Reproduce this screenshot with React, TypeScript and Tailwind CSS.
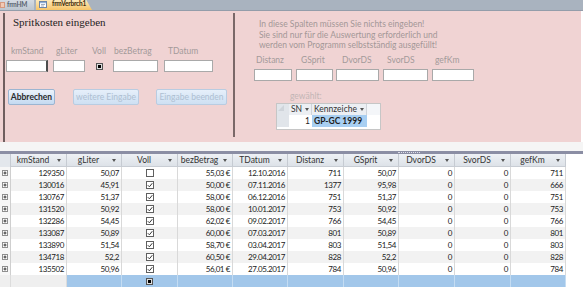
import React from "react";

const cols = [
  { name: "kmStand", w: "w-[56px]" },
  { name: "gLiter", w: "w-[55px]" },
  { name: "Voll", w: "w-[56px]" },
  { name: "bezBetrag", w: "w-[55px]" },
  { name: "TDatum", w: "w-[55px]" },
  { name: "Distanz", w: "w-[56px]" },
  { name: "GSprit", w: "w-[55px]" },
  { name: "DvorDS", w: "w-[56px]" },
  { name: "SvorDS", w: "w-[56px]" },
  { name: "gefKm", w: "w-[55px]" },
];

type Row = [string, string, boolean, string, string, string, string, string, string, string];

const rows: Row[] = [
  ["129350", "50,07", false, "55,03 €", "12.10.2016", "711", "50,07", "0", "0", "711"],
  ["130016", "45,91", true, "50,00 €", "07.11.2016", "1377", "95,98", "0", "0", "666"],
  ["130767", "51,37", true, "58,00 €", "06.12.2016", "751", "51,37", "0", "0", "751"],
  ["131520", "50,92", true, "58,00 €", "10.01.2017", "753", "50,92", "0", "0", "753"],
  ["132286", "54,45", true, "62,02 €", "09.02.2017", "766", "54,45", "0", "0", "766"],
  ["133087", "50,89", true, "60,00 €", "07.03.2017", "801", "50,89", "0", "0", "801"],
  ["133890", "51,54", true, "58,70 €", "03.04.2017", "803", "51,54", "0", "0", "803"],
  ["134718", "52,2", true, "60,50 €", "29.04.2017", "828", "52,2", "0", "0", "828"],
  ["135502", "50,96", true, "56,01 €", "27.05.2017", "784", "50,96", "0", "0", "784"],
];

const Arrow = () => (
  <svg width="4" height="3" viewBox="0 0 4 3">
    <polygon points="0,0 4,0 2,3" fill="#555" />
  </svg>
);

const Expand = () => (
  <svg width="6" height="6" viewBox="0 0 6 6">
    <rect x="0.5" y="0.5" width="5" height="5" fill="#fff" stroke="#8f8f8f" />
    <path d="M1.5 3h3M3 1.5v3" stroke="#333" strokeWidth="1" />
  </svg>
);

const Check = ({ checked }: { checked: boolean }) => (
  <svg width="8" height="8" viewBox="0 0 8 8">
    <rect x="0.5" y="0.5" width="7" height="7" fill="#fff" stroke="#5f5f5f" />
    {checked && <path d="M1.8 4.2 L3.4 5.8 L6.3 2.2" fill="none" stroke="#333" strokeWidth="1" />}
  </svg>
);

const NullCheck = () => (
  <div className="w-[7px] h-[7px] border border-[#555] bg-[#ddd] p-[1px]">
    <div className="w-full h-full bg-black" />
  </div>
);

const FormIcon = () => (
  <svg width="8" height="7" viewBox="0 0 8 7">
    <rect x="0.5" y="0.5" width="7" height="6" fill="#fff" stroke="#6d86a8" />
    <rect x="1" y="1" width="6" height="1.2" fill="#8fb0d8" />
    <path d="M2 3.5h4M2 5h3" stroke="#8a9ab0" strokeWidth="0.8" />
  </svg>
);

const btn = "h-[16px] rounded-[2px] border flex items-center justify-center text-[8.5px] bg-gradient-to-b";

export default function App() {
  return (
    <div className="w-[583px] h-[289px] overflow-hidden bg-white font-['Lato',sans-serif] text-[#222]">
      {/* tab bar */}
      <div className="h-[11px] bg-[#a9b3bf] border-b border-[#939daa] flex items-end">
        <div className="h-[10px] w-[34px] flex items-center gap-[2px] bg-gradient-to-b from-[#d5dbe3] to-[#bcc5cf]">
          <div className="w-[5px] h-[6px] bg-[#f2c9b4] border border-[#d69a80]" />
          <span className="text-[6.5px] font-bold text-[#5a6370] leading-none tracking-[-0.2px]">frmHM</span>
        </div>
        <div className="ml-[2px] h-[11px] w-[56px] flex items-center gap-[5px] pl-[3px] bg-gradient-to-b from-[#fdedc2] to-[#f6c466] [clip-path:polygon(0_0,89%_0,100%_100%,0_100%)]">
          <FormIcon />
          <span className="text-[6.5px] font-bold text-[#3b2a0c] leading-none tracking-[-0.2px]">frmVerbrch1</span>
        </div>
      </div>

      {/* form area */}
      <div className="h-[131px] bg-[#f0d3d3] mr-[2px] flex">
        <div className="w-[230px] ml-[3px] mt-[2px] border-l-2 border-[#6f5e5e] flex flex-col">
          <div className="pl-[8px] mt-[3px] text-[11px] leading-[13px] font-['Liberation_Serif',serif] text-[#1e1e1e]">
            Spritkosten eingeben
          </div>
          <div className="flex mt-[17px] pl-[6px] text-[8.5px] leading-[10px] text-[#a39a9a]">
            <span className="w-[45px]">kmStand</span>
            <span className="w-[36px]">gLiter</span>
            <span className="w-[22px]">Voll</span>
            <span className="w-[54px]">bezBetrag</span>
            <span>TDatum</span>
          </div>
          <div className="flex items-center mt-[4px] pl-[1px] h-[12px]">
            <div className="w-[42px] h-[12px] bg-white border border-[#a9a9a9] border-r-2 border-r-[#4d4d4d]" />
            <div className="ml-[5px] w-[32px] h-[12px] bg-white border border-[#a9a9a9]" />
            <div className="ml-[11px]">
              <NullCheck />
            </div>
            <div className="ml-[10px] w-[45px] h-[12px] bg-white border border-[#a9a9a9]" />
            <div className="ml-[6px] w-[49px] h-[12px] bg-white border border-[#a9a9a9]" />
          </div>
          <div className="flex mt-[17px] pl-[3px]">
            <div className={`${btn} w-[47px] border-[#9cb5d1] from-[#ecf3fb] to-[#c4daf1] font-bold text-[#2b2b2b]`}>
              Abbrechen
            </div>
            <div className={`${btn} ml-[18px] w-[66px] border-[#b9cce1] from-[#e6effa] to-[#cee0f3] text-[#aebfd2]`}>
              weitere Eingabe
            </div>
            <div className={`${btn} ml-[17px] w-[71px] border-[#b9cce1] from-[#e6effa] to-[#cee0f3] text-[#aebfd2]`}>
              Eingabe beenden
            </div>
          </div>
        </div>

        <div className="w-[2px] mt-[2px] mb-[5px] bg-[#7a6868]" />

        <div className="flex-1 flex flex-col">
          <div className="pl-[24px] mt-[8px] text-[8.5px] leading-[10.7px] text-[#a39797]">
            <div>In diese Spalten müssen Sie nichts eingeben!</div>
            <div>Sie sind nur für die Auswertung erforderlich und</div>
            <div>werden vom Programm selbstständig ausgefüllt!</div>
          </div>
          <div className="flex mt-[4px] pl-[21px] text-[8.5px] leading-[10px] text-[#a39a9a]">
            <span className="w-[45px]">Distanz</span>
            <span className="w-[41px]">GSprit</span>
            <span className="w-[45px]">DvorDS</span>
            <span className="w-[48px]">SvorDS</span>
            <span>gefKm</span>
          </div>
          <div className="flex mt-[4px] pl-[19px]">
            <div className="w-[38px] h-[12px] bg-white border border-[#a9a9a9]" />
            <div className="ml-[4px] w-[37px] h-[12px] bg-white border border-[#a9a9a9]" />
            <div className="ml-[3px] w-[43px] h-[12px] bg-white border border-[#a9a9a9]" />
            <div className="ml-[4px] w-[45px] h-[12px] bg-white border border-[#a9a9a9]" />
            <div className="ml-[4px] w-[42px] h-[12px] bg-white border border-[#a9a9a9]" />
          </div>
          <div className="pl-[55px] mt-[10px] text-[8.5px] leading-[10px] text-[#c2b5b5]">gewählt:</div>
          <div className="ml-[41px] mt-[2px] w-[105px] h-[27px] border border-[#c6c6c6] bg-white flex flex-col">
            <div className="h-[11px] flex bg-[#eceff3] text-[8.5px] leading-[11px] text-[#333]">
              <div className="w-[12px] bg-[#e1e5ea] relative">
                <svg className="absolute left-[1px] top-[1px]" width="6" height="6" viewBox="0 0 6 6">
                  <polygon points="6,0 6,6 0,6" fill="#cfd4da" />
                </svg>
              </div>
              <div className="w-[23px] flex items-center justify-center gap-[3px] border-r border-[#d0d4da]">
                <span>SN</span>
                <Arrow />
              </div>
              <div className="w-[55px] flex items-center justify-center gap-[3px] border-r border-[#d0d4da]">
                <span>Kennzeiche</span>
                <Arrow />
              </div>
              <div className="flex-1 bg-[#f4f6f9]" />
            </div>
            <div className="h-[12px] flex text-[8.5px] leading-[12px]">
              <div className="w-[12px] bg-[#e1e5ea]" />
              <div className="w-[23px] text-right pr-[2px]">1</div>
              <div className="w-[55px] bg-[#a8cff2] pl-[2px] font-bold text-[#1e1e1e]">GP-GC 1999</div>
              <div className="flex-1" />
            </div>
          </div>
        </div>
      </div>

      {/* splitter */}
      <div className="h-[9px] bg-[#f5f5f5]" />
      <div className="h-[3px] bg-[#8b8ea4] flex items-center">
        <div className="ml-[398px] w-[22px] border-t border-dotted border-[#e0e0ea]" />
      </div>

      {/* datasheet header */}
      <div className="h-[13px] flex bg-white text-[8.5px] text-[#333]">
        <div className="w-[11px] bg-[#e3e7ec] border-r border-[#c6cbd2]" />
        {cols.map((c) => (
          <div
            key={c.name}
            className={`${c.w} flex items-center bg-gradient-to-b from-[#eef1f5] to-[#dde2e8] border-r border-[#c6cbd2] border-b border-b-[#c8cdd4]`}
          >
            <span className="flex-1 text-center leading-[13px]">{c.name}</span>
            <span className="w-[8px] mr-[3px] flex justify-center">
              <Arrow />
            </span>
          </div>
        ))}
      </div>

      {/* rows */}
      {rows.map((r, i) => (
        <div key={i} className="h-[12px] flex text-[8px] leading-[12px] tracking-[-0.4px] text-[#222]">
          <div className="w-[11px] flex items-center justify-center bg-[#f7f7f7] border-r border-[#cfcfcf]">
            <Expand />
          </div>
          {cols.map((c, j) => (
            <div
              key={c.name}
              className={`${c.w} ${i % 2 === 1 ? "bg-[#f2f2f2]" : "bg-white"} border-r border-[#d9d9d9] ${
                j === 2 ? "flex items-center justify-center" : "text-right pr-[2px]"
              }`}
            >
              {j === 2 ? <Check checked={r[2]} /> : (r[j] as string)}
            </div>
          ))}
        </div>
      ))}

      {/* new record row */}
      <div className="h-[12px] flex">
        <div className="w-[11px] bg-[#efefef] border-r border-[#dcdcdc]" />
        {cols.map((c, j) => (
          <div
            key={c.name}
            className={`${c.w} border-r ${j === 0 ? "bg-[#efefef] border-[#dcdcdc]" : "bg-[#a2c7ea] border-[#c4dcf2]"} ${
              j === 2 ? "flex items-center justify-center" : ""
            }`}
          >
            {j === 2 && <NullCheck />}
          </div>
        ))}
      </div>
    </div>
  );
}
